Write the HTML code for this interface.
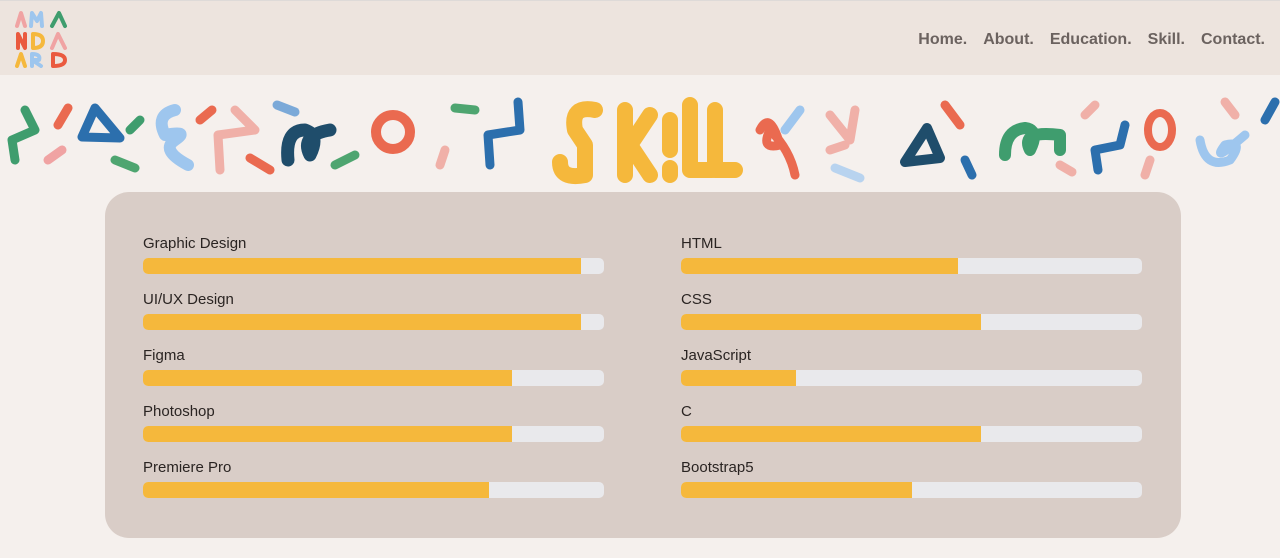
<!DOCTYPE html>
<html><head><meta charset="utf-8"><style>
*{margin:0;padding:0;box-sizing:border-box}
body{width:1280px;height:558px;overflow:hidden;background:#f5f0ed;font-family:"Liberation Sans",sans-serif}
header{height:75px;background:#ede4de;border-top:1px solid #dedad8;position:relative}
.logo{position:absolute;left:15px;top:9px}
nav{position:absolute;right:15px;top:30px;font-weight:bold;font-size:16px;color:#6b625f}
nav span{margin-left:16px}
.card{position:absolute;left:105px;top:192px;width:1076px;height:346px;background:#d9cdc7;border-radius:24px}
.sk{position:absolute;width:461px}
.sk .l{font-size:15px;color:#2a2422;height:16px;line-height:16px;position:relative;top:2px}
.sk .b{margin-top:8px;height:16px;background:#e9e9ec;border-radius:5px;overflow:hidden}
.sk .f{height:100%;background:#f5b83c}
</style></head><body>
<header>
<svg class="logo" width="54" height="58" viewBox="0 0 54 58" fill="none" stroke-width="4" stroke-linecap="round" stroke-linejoin="round">
<path d="M2 16 L6 3 L10 16" stroke="#f0a3a3"/>
<path d="M16 16 L17 3 L22 11 L26 3 L27 16" stroke="#9ec6ee"/>
<path d="M37 16 L44 3 L50 16" stroke="#3f9d6e"/>
<path d="M3 38 L3 24 L10 38 L10 24" stroke="#ea5a3f"/>
<path d="M18 24 L18 38 M18 24 Q28 24 28 31 Q28 38 18 38" stroke="#f5b83c"/>
<path d="M37 38 L43 24 L50 38" stroke="#f0a3a3"/>
<path d="M2 56 L6 44 L10 56" stroke="#f5b83c"/>
<path d="M17 56 L17 44 Q26 44 24 50 L17 50 L26 56" stroke="#9ec6ee"/>
<path d="M38 44 L38 56 M38 44 Q50 44 50 50 Q50 56 38 56" stroke="#ea5a3f"/>
</svg>
<nav><span>Home.</span><span>About.</span><span>Education.</span><span>Skill.</span><span>Contact.</span></nav>
</header>
<svg style="position:absolute;left:0;top:90px" width="1280" height="100" viewBox="0 0 1280 100" fill="none" stroke-linecap="round" stroke-linejoin="round">
<g stroke-width="9">
<path d="M25 20 L35 40 L12 50 L15 70" stroke="#3f9d6e"/>
<path d="M58 35 L68 18" stroke="#ea6a50"/><path d="M48 70 L62 60" stroke="#f0a3a3"/>
<path d="M95 18 L82 47 L120 48 Z" stroke="#2c6fad"/>
<path d="M130 40 L140 30" stroke="#3f9d6e"/><path d="M115 70 L135 78" stroke="#4ea570"/>
<path d="M175 20 Q155 25 165 45 Q190 40 175 50 Q160 60 188 75" stroke="#9ec6ee" stroke-width="12"/>
<path d="M200 30 L212 20" stroke="#ea6a50"/>
<path d="M235 20 L255 40 L218 45 L220 80" stroke="#f0b0a8"/>
<path d="M250 68 L270 80" stroke="#ea6a50"/><path d="M277 15 L295 22" stroke="#7ba9d8"/>
<path d="M288 70 Q285 40 305 40 Q320 45 310 65 Q300 45 330 40" stroke="#1f4d6b" stroke-width="13"/>
<path d="M335 75 L355 65" stroke="#4ea570"/>
<circle cx="393" cy="42" r="17" stroke="#ea6a50" stroke-width="10"/>
<path d="M440 75 L445 60" stroke="#f0b0a8"/><path d="M455 18 L475 20" stroke="#4ea570"/>
<path d="M518 12 L520 40 L488 45 L490 75" stroke="#2c6fad"/>
<path d="M760 40 Q770 20 780 55 Q760 60 770 40 Q790 60 795 85" stroke="#ea6a50"/>
<path d="M785 40 L800 20" stroke="#9ec6ee"/>
<path d="M830 25 L850 50 L855 20 M830 60 L845 55" stroke="#f0b0a8"/>
<path d="M835 78 L860 88" stroke="#b8d3ef"/>
<path d="M927 38 L905 72 L940 68 Z" stroke="#1f4d6b" stroke-width="10"/>
<path d="M945 15 L960 35" stroke="#ea6a50"/><path d="M965 70 L972 85" stroke="#2c6fad"/>
<path d="M1005 65 Q1005 40 1025 38 Q1040 40 1030 60 Q1020 40 1060 45 L1060 60" stroke="#3f9d6e" stroke-width="12"/>
<path d="M1060 75 L1072 82" stroke="#f0b0a8"/><path d="M1085 25 L1095 15" stroke="#f0b0a8"/>
<path d="M1125 35 L1120 55 L1095 60 L1098 80" stroke="#2c6fad"/>
<ellipse cx="1160" cy="40" rx="12" ry="17" stroke="#ea6a50" stroke-width="8"/>
<path d="M1150 70 L1145 85" stroke="#f0b0a8"/>
<path d="M1200 50 Q1205 80 1230 70 Q1245 50 1225 55 Q1210 75 1245 45" stroke="#9ec6ee"/>
<path d="M1225 12 L1235 25" stroke="#f0b0a8"/><path d="M1265 30 L1275 12" stroke="#2c6fad"/>
</g>
<g stroke="#f5b83c" stroke-width="16">
<path d="M595 20 Q570 15 575 40 L585 55 L585 85 Q560 90 560 72"/>
<path d="M625 20 L625 85 M650 25 L630 55 L650 85"/>
<path d="M670 30 L670 60 M670 78 L670 85"/>
<path d="M690 15 L690 80 L712 80"/>
<path d="M715 20 L715 80 L735 80"/>
</g>
</svg>
<div class="card">
<div class="sk" style="left:38px;top:42px"><div class="l">Graphic Design</div><div class="b"><div class="f" style="width:95%"></div></div></div>
<div class="sk" style="left:38px;top:98px"><div class="l">UI/UX Design</div><div class="b"><div class="f" style="width:95%"></div></div></div>
<div class="sk" style="left:38px;top:154px"><div class="l">Figma</div><div class="b"><div class="f" style="width:80%"></div></div></div>
<div class="sk" style="left:38px;top:210px"><div class="l">Photoshop</div><div class="b"><div class="f" style="width:80%"></div></div></div>
<div class="sk" style="left:38px;top:266px"><div class="l">Premiere Pro</div><div class="b"><div class="f" style="width:75%"></div></div></div>
<div class="sk" style="left:576px;top:42px"><div class="l">HTML</div><div class="b"><div class="f" style="width:60%"></div></div></div>
<div class="sk" style="left:576px;top:98px"><div class="l">CSS</div><div class="b"><div class="f" style="width:65%"></div></div></div>
<div class="sk" style="left:576px;top:154px"><div class="l">JavaScript</div><div class="b"><div class="f" style="width:25%"></div></div></div>
<div class="sk" style="left:576px;top:210px"><div class="l">C</div><div class="b"><div class="f" style="width:65%"></div></div></div>
<div class="sk" style="left:576px;top:266px"><div class="l">Bootstrap5</div><div class="b"><div class="f" style="width:50%"></div></div></div>
</div>
</body></html>
